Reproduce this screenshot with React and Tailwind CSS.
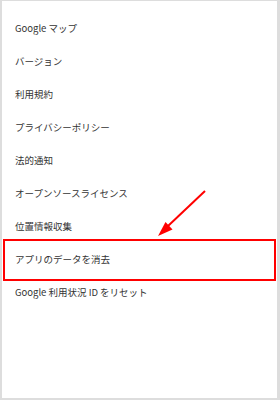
const items = [
  "Google マップ",
  "バージョン",
  "利用規約",
  "プライバシーポリシー",
  "法的通知",
  "オープンソースライセンス",
  "位置情報収集",
  "アプリのデータを消去",
  "Google 利用状況 ID をリセット",
];

export default function App() {
  return (
    <div className="relative w-[280px] h-[400px] bg-white border-t border-l-2 border-r-[3px] border-b-2 border-[#dddddd] font-['Noto_Sans_CJK_JP','Noto_Sans',sans-serif]">
      <ul className="pt-[11px]">
        {items.map((label) => (
          <li
            key={label}
            className="h-[33px] flex items-center pl-[13px] text-[9.5px] text-[#333333]"
          >
            {label}
          </li>
        ))}
      </ul>

      {/* highlight around the target row */}
      <div className="absolute left-[1px] top-[238px] w-[273px] h-[42px] border-2 border-[#ff0000]" />

      {/* pointer arrow */}
      <svg
        className="absolute left-[-2px] top-[-1px]"
        width="280"
        height="400"
        viewBox="0 0 280 400"
      >
        <line x1="205" y1="191" x2="168" y2="226" stroke="#ff0000" strokeWidth="2" />
        <polygon points="158,236 172.5,229.5 165.5,222" fill="#ff0000" />
      </svg>
    </div>
  );
}
